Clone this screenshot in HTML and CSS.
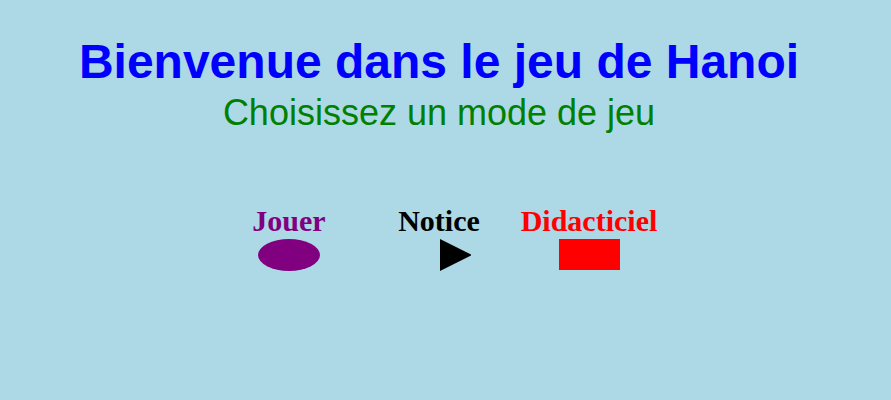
FILE: index.html
```html
<!DOCTYPE html>
<html lang="fr">
<head>
<meta charset="utf-8">
<title>Hanoi</title>
<link rel="stylesheet" href="styles.css">
</head>
<body>
<main class="page">
  <h1 class="title">Bienvenue dans le jeu de Hanoi</h1>
  <p class="subtitle">Choisissez un mode de jeu</p>
  <div class="modes">
    <a class="mode mode-jouer">
      <span class="label">Jouer</span>
      <svg class="shape" width="64" height="32" viewBox="0 0 64 32"><ellipse cx="32" cy="16" rx="31" ry="16" fill="#800080"/></svg>
    </a>
    <a class="mode mode-notice">
      <span class="label">Notice</span>
      <svg class="shape" width="64" height="32" viewBox="0 0 64 32"><polygon points="33,0 65,16 33,32" fill="#000"/></svg>
    </a>
    <a class="mode mode-didac">
      <span class="label">Didacticiel</span>
      <svg class="shape" width="64" height="32" viewBox="0 0 64 32"><rect x="2" y="0" width="61" height="31" fill="#ff0000"/></svg>
    </a>
  </div>
</main>
</body>
</html>
```
FILE: styles.css
```css
html, body {
  margin: 0;
  padding: 0;
  background: #add8e6;
}
.page {
  width: 878px;
  display: flex;
  flex-direction: column;
  align-items: center;
  padding-top: 34px;
}
.title {
  margin: 0;
  font-family: "Liberation Sans", Arial, sans-serif;
  font-weight: bold;
  font-size: 48px;
  color: #0000ff;
  line-height: 55px;
}
.subtitle {
  margin: 3px 0 0;
  font-family: "Liberation Sans", Arial, sans-serif;
  font-size: 36px;
  color: #008000;
  line-height: 41px;
}
.modes {
  display: flex;
  margin-top: 71px;
}
.mode {
  width: 150px;
  display: flex;
  flex-direction: column;
  align-items: center;
  font-family: "Liberation Serif", "Times New Roman", serif;
  font-weight: bold;
  font-size: 30px;
}
.label {
  line-height: 34px;
}
.mode-jouer { color: #800080; }
.mode-notice { color: #000; }
.mode-didac { color: #ff0000; }
.shape {
  display: block;
  margin-top: 1px;
}
```
